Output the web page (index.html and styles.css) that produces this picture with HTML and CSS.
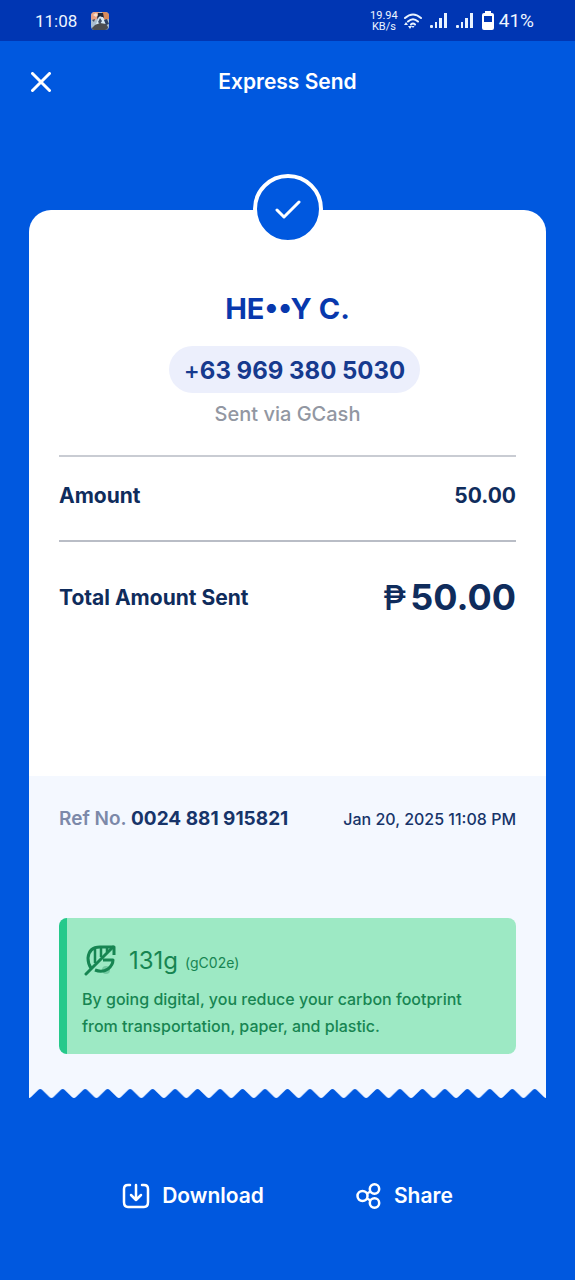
FILE: index.html
```html
<!DOCTYPE html>
<html lang="en">
<head>
<meta charset="utf-8">
<meta name="viewport" content="width=device-width, initial-scale=1">
<title>Express Send</title>
<link rel="stylesheet" href="styles.css">
</head>
<body>
<div class="status">
  <span class="clock">11:08</span>
  <svg class="app-badge" width="18" height="18" viewBox="0 0 18 18" aria-hidden="true">
    <rect width="18" height="18" rx="4" fill="#a9bdd0"/>
    <path d="M0 4Q0 0 4 0H8L7 6L3 9L0 7Z" fill="#e9a184"/>
    <path d="M11 0H14Q18 0 18 4V7L14 8L11 5Z" fill="#d98b5c"/>
    <path d="M7 1H12L13 6L9 4L6 7Z" fill="#202637"/>
    <path d="M2 3L5 1L7 3L5 5Z" fill="#f7dfcc"/>
    <path d="M8 5H12L15 12L10 14L5 12Z" fill="#d6e9f5"/>
    <path d="M9 6L11 9L9 12L7 10ZM1 8L4 7L3 10Z" fill="#414f68"/>
    <path d="M4 13L9 11L15 12L17 15Q17 18 14 18H4Q1 18 1 16Z" fill="#4c4d50"/>
    <path d="M13 8L16 7L18 12L15 13Z" fill="#2b3f63"/>
  </svg>
  <span class="speed">19.94<br>KB/s</span>
  <svg class="wifi" width="18" height="16" viewBox="0 0 18 16" aria-hidden="true">
    <path d="M1 5Q9-2 17 5M4 8.500Q9 4 14 8.500M7 11.500Q9 9.500 11 11.500" fill="none" stroke="#e8f3ff" stroke-width="2" stroke-linecap="round"/>
    <path d="M7.500 13H10.500L9 15ZM0 12L2 9L4 12ZM4 13H8L6 16Z" fill="#e8f3ff"/>
  </svg>
  <svg class="signal" width="18" height="15" viewBox="0 0 18 15" fill="#e8f3ff" aria-hidden="true"><rect y="12" width="3" height="3" rx="1"/><rect x="5" y="9" width="2" height="6"/><rect x="9" y="5" width="3" height="10"/><rect x="14" width="3" height="15"/></svg>
  <svg class="signal" width="18" height="15" viewBox="0 0 18 15" fill="#e8f3ff" aria-hidden="true"><rect y="12" width="3" height="3" rx="1"/><rect x="5" y="9" width="2" height="6"/><rect x="9" y="5" width="3" height="10"/><rect x="14" width="3" height="15"/></svg>
  <svg class="battery" width="12" height="19" viewBox="0 0 12 19" aria-hidden="true"><path fill="#fff" fill-rule="evenodd" d="M3 0H9V2H10Q12 2 12 4V17Q12 19 10 19H2Q0 19 0 17V4Q0 2 2 2H3ZM2 5V11H10V5Z"/></svg>
  <span class="percent">41%</span>
</div>
<header class="header">
  <button class="close" type="button" aria-label="Close"><svg width="20" height="20" viewBox="0 0 20 20" fill="none" stroke="#fff" stroke-width="3" stroke-linecap="round"><path d="M1.500 1.500L18.500 18.500M18.500 1.500L1.500 18.500"/></svg></button>
  <h1 class="title">Express Send</h1>
</header>
<main class="main">
  <div class="check"><svg width="26" height="19" viewBox="0 0 26 19" fill="none" stroke="#fff" stroke-width="3" stroke-linecap="round" stroke-linejoin="round" aria-hidden="true"><path d="M2 10L9 17L24 2"/></svg></div>
  <section class="receipt">
    <div class="recipient">
      <h2 class="name">HE••Y C.</h2>
      <p class="phone"><span class="plus">+</span>63 969 380 5030</p>
      <p class="via">Sent via GCash</p>
    </div>
    <div class="row amount"><span>Amount</span><span>50.00</span></div>
    <div class="row total"><span>Total Amount Sent</span><span class="sum"><span class="peso">₱</span>50.00</span></div>
  </section>
  <section class="details">
    <div class="reference">
      <span class="ref-label">Ref No. <b class="ref-number">0024 881 915821</b></span>
      <time class="date" datetime="2025-01-20T23:08">Jan 20, 2025 11:08 PM</time>
    </div>
    <div class="carbon">
      <div class="saving">
        <svg width="34" height="32" viewBox="0 0 34 32" fill="none" stroke="#178552" stroke-width="3" aria-hidden="true">
          <circle cx="24" cy="26" r="4" fill="#178552" fill-opacity=".3" stroke="none"/>
          <path d="M4 30L31 3" stroke-linecap="round"/>
          <path d="M32 11V3H18Q7 3 6 14Q6 20 9 24M13 26Q20 29 26 25Q31 21 31 16H21" stroke-linejoin="round"/>
          <path d="M13 5V19M19 3V13M25 3V8" stroke-width="2.500"/>
        </svg>
        <span class="grams">131g</span><span class="unit">(gC02e)</span>
      </div>
      <p class="note">By going digital, you reduce your carbon footprint from transportation, paper, and plastic.</p>
    </div>
  </section>
  <svg class="tear" width="100%" height="10" viewBox="0 0 506 10" preserveAspectRatio="none" aria-hidden="true">
    <defs><pattern id="teeth" width="22" height="10" patternUnits="userSpaceOnUse"><path fill="#f4f8ff" d="M0 0H22V9Q21 9 20 8L13 1Q11-1 9 1L2 8Q1 9 0 9Z"/></pattern></defs>
    <rect width="506" height="10" fill="url(#teeth)"/>
  </svg>
</main>
<footer class="actions">
  <button class="action" type="button">
    <svg width="28" height="26" viewBox="0 0 28 26" fill="none" stroke="#fff" stroke-width="2.500" stroke-linecap="round" stroke-linejoin="round" aria-hidden="true"><path d="M8 2H6Q2 2 2 6V19Q2 24 6 24H22Q26 24 26 19V6Q26 2 22 2H20M14 2V17M9 12L14 17L19 12"/></svg>
    Download
  </button>
  <button class="action" type="button">
    <svg width="26" height="26" viewBox="0 0 26 26" fill="none" stroke="#fff" stroke-width="2.500" aria-hidden="true"><circle cx="6.500" cy="13" r="5"/><circle cx="18.500" cy="6" r="4.700"/><circle cx="18.500" cy="20" r="4.700"/><path d="M11 10.500L14.500 8.500M11 15.500L14.500 17.500"/></svg>
    Share
  </button>
</footer>
</body>
</html>
```
FILE: styles.css
```css
* { box-sizing: border-box; }
body { margin: 0; min-height: 100vh; background: #0058df; color: #0f2c5c; font-family: Inter, "Noto Sans", sans-serif; }
h1, h2, p { margin: 0; }
button { margin: 0; padding: 0; border: 0; background: none; color: #fff; font: inherit; }
svg { display: block; flex: none; }

.status { display: flex; align-items: center; height: 41px; padding: 0 41px 0 35px; background: #0036b3; color: #eef5ff; font-family: Roboto, sans-serif; }
.clock { font-size: 17px; }
.app-badge { margin-left: 14px; }
.speed { margin-left: auto; font-size: 11px; line-height: 11px; text-align: center; }
.wifi { margin-left: 6px; }
.signal { margin-left: 8px; }
.battery { margin: 0 5px 0 8px; }
.percent { font-size: 19px; }

.header { display: grid; grid-template-columns: 1fr auto 1fr; align-items: center; height: 82px; padding: 0 31px; }
.close { justify-self: start; }
.title { color: #fff; font-size: 21px; font-weight: 600; line-height: 28px; }

.main { position: relative; margin: 87px 29px 0; }
.check { position: absolute; top: -36px; left: 50%; display: flex; align-items: center; justify-content: center; width: 70px; height: 70px; margin-left: -35px; border: 4px solid #fff; border-radius: 50%; background: #0058df; }
.receipt { height: 566px; padding: 80px 30px 0; border-radius: 22px 22px 0 0; background: #fff; }
.recipient { display: flex; flex-direction: column; align-items: center; height: 167px; border-bottom: 2px solid #c9ccd3; }
.name { color: #0838ad; font-size: 29px; font-weight: 700; line-height: 38px; }
.phone { margin: 18px 0 0 14px; padding: 2px 15px 0; border-radius: 24px; background: #eceffc; color: #163a8e; font-size: 24px; font-weight: 700; line-height: 45px; }
.plus { font-weight: 500; }
.via { margin-top: 7px; color: #9297a2; font-size: 20px; font-weight: 500; line-height: 28px; }
.row { display: flex; align-items: center; justify-content: space-between; font-size: 21px; font-weight: 700; }
.amount { height: 85px; padding-bottom: 6px; border-bottom: 2px solid #b9bdc6; }
.total { height: 110px; }
.sum { font-size: 36px; }
.peso { margin-right: 4px; font-size: 34px; font-weight: 500; }

.details { padding: 28px 30px 35px; background: #f4f8ff; }
.reference { display: flex; align-items: center; justify-content: space-between; line-height: 30px; white-space: nowrap; }
.ref-label { color: #7c89a9; font-size: 19px; font-weight: 600; }
.ref-number { color: #173469; font-weight: 700; }
.date { color: #173469; font-size: 16px; font-weight: 500; }
.carbon { margin-top: 84px; padding: 24px 23px 14px 15px; border-left: 8px solid #25c98b; border-radius: 8px; background: #9de9c4; color: #178552; }
.saving { display: flex; align-items: center; height: 36px; }
.grams { margin-left: 13px; font-size: 24px; }
.unit { margin: 4px 0 0 7px; font-size: 14px; }
.note { margin-top: 8px; font-size: 16px; font-weight: 500; line-height: 27px; }
.tear { display: block; }

.actions { display: flex; justify-content: center; gap: 92px; padding: 80px 0 70px; }
.action { display: flex; align-items: center; gap: 12px; font-size: 21px; font-weight: 600; line-height: 34px; }
```
